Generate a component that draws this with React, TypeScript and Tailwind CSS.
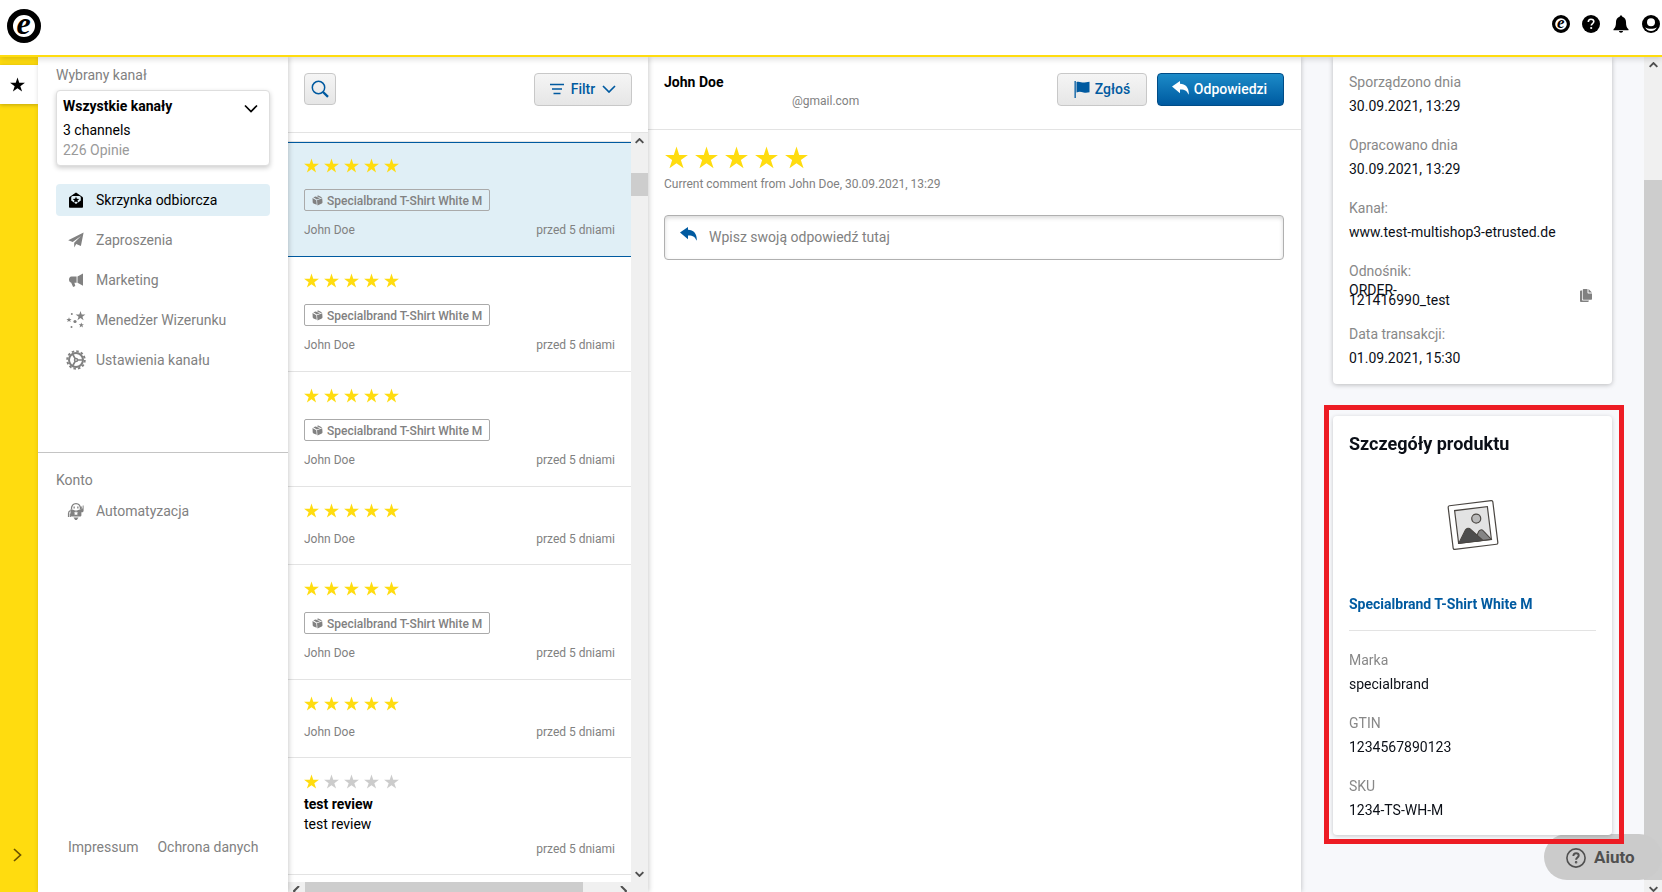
import { useState } from "react";
import type { ReactNode } from "react";
import clsx from "clsx";

interface Review {
  id: number;
  rating: number;
  product?: string;
  author?: string;
  title?: string;
  text?: string;
  date: string;
}

const PRODUCT = "Specialbrand T-Shirt White M";

const reviews: Review[] = [
  { id: 1, rating: 5, product: PRODUCT, author: "John Doe", date: "przed 5 dniami" },
  { id: 2, rating: 5, product: PRODUCT, author: "John Doe", date: "przed 5 dniami" },
  { id: 3, rating: 5, product: PRODUCT, author: "John Doe", date: "przed 5 dniami" },
  { id: 4, rating: 5, author: "John Doe", date: "przed 5 dniami" },
  { id: 5, rating: 5, product: PRODUCT, author: "John Doe", date: "przed 5 dniami" },
  { id: 6, rating: 5, author: "John Doe", date: "przed 5 dniami" },
  { id: 7, rating: 1, title: "test review", text: "test review", date: "przed 5 dniami" },
];

const STAR = "M12 1l2.69 8.29h8.72l-7.05 5.13 2.69 8.29L12 17.58l-7.05 5.13 2.69-8.29L.59 9.29h8.72z";

function Star({ className }: { className?: string }) {
  return (
    <svg viewBox="0.5 0.4 23 23" className={className} fill="currentColor" aria-hidden="true">
      <path d={STAR} />
    </svg>
  );
}

function Stars({ rating, large }: { rating: number; large?: boolean }) {
  return (
    <div className={clsx("flex", large ? "gap-[7px]" : "gap-[5px]")} role="img" aria-label={`${rating}/5`}>
      {[1, 2, 3, 4, 5].map((n) => (
        <Star
          key={n}
          className={clsx(large ? "size-[23px]" : "size-[15px]", n <= rating ? "text-[#ffdc0f]" : "text-[#ccc]")}
        />
      ))}
    </div>
  );
}

function BrandMark({ className }: { className?: string }) {
  return (
    <svg viewBox="0 0 34 34" className={className} aria-hidden="true">
      <circle cx="17" cy="17" r="14" fill="#fff" stroke="#000" strokeWidth="6" />
      <text
        x="16.5"
        y="24.5"
        textAnchor="middle"
        fontFamily="Liberation Serif, serif"
        fontStyle="italic"
        fontWeight="700"
        fontSize="32"
      >
        e
      </text>
    </svg>
  );
}

function InboxIcon() {
  return (
    <svg viewBox="0 0 16 16" className="size-4" aria-hidden="true">
      <path fill="currentColor" fillRule="evenodd" d="M8 .5l6.2 4.3c.5.3.8.8.8 1.4V15a.8.8 0 0 1-.8.8H1.800A.8.8 0 0 1 1 15V6.200c0-.6.3-1.100.8-1.400zM3.200 5.500v3L8 12l4.800-3.500v-3A1.500 1.500 0 0 0 11.300 4H4.700a1.500 1.500 0 0 0-1.500 1.500z" />
      <path fill="currentColor" d="M8 4.600l.9 2.200 2.400.2-1.800 1.500.6 2.300L8 9.600l-2.100 1.200.6-2.300L4.700 7l2.400-.2z" />
    </svg>
  );
}

function PlaneIcon() {
  return (
    <svg viewBox="0 0 16 16" className="size-4" fill="currentColor" aria-hidden="true">
      <path d="M15.600.5L.2 8.300l4.500 1.800L13 4 6.200 10.800V15.500l2-3.400 4.700 1.800z" />
    </svg>
  );
}

function MegaphoneIcon() {
  return (
    <svg viewBox="0 0 16 16" className="size-4" fill="currentColor" aria-hidden="true">
      <path d="M15 1.500v12.300l-5.500-3V4.500z" />
      <path d="M8.600 4.400v6.300H6.400l.9 3.300-2.200 1-2-4.400C1.600 10.200 1 9 1 7.500s.8-3.100 2.500-3.100z" />
    </svg>
  );
}

function SparkleIcon() {
  return (
    <svg viewBox="0 0 20 20" className="size-5" fill="currentColor" aria-hidden="true">
      <path d="M14.500 1l1.200 3.500h3.700l-3 2.200 1.200 3.600-3.100-2.200-3.100 2.200 1.200-3.600-3-2.200h3.700z" />
      <path d="M3 7.200l.7 1.800h1.900L4.100 10.200l.6 1.900L3 11l-1.700 1.100.6-1.900L.4 9h1.900z" />
      <path d="M15.300 12.500l.7 1.800h1.900l-1.500 1.200.6 1.900-1.700-1.100-1.700 1.100.6-1.900-1.500-1.200h1.900z" />
      <circle cx="9" cy="11.500" r="1.600" />
      <circle cx="5.800" cy="4" r="1" />
      <circle cx="5.500" cy="17" r="1" />
    </svg>
  );
}

function GearIcon() {
  return (
    <svg viewBox="0 0 20 20" className="size-5" fill="none" stroke="currentColor" aria-hidden="true">
      <circle cx="10" cy="10" r="7" strokeWidth="2" />
      <circle cx="10" cy="10" r="8.800" strokeWidth="1.900" strokeDasharray="2.500 2.110" />
      <circle cx="10" cy="10" r="1.500" strokeWidth="1.500" />
      <path strokeWidth="1.700" d="M11.500 10H17M9.200 8.700L6.500 4M9.200 11.300L6.500 16" />
    </svg>
  );
}

function RobotIcon() {
  return (
    <svg viewBox="0 0 18 18" className="size-[18px]" aria-hidden="true">
      <path fill="none" stroke="currentColor" strokeWidth="1.300" d="M4.500 7.500C4.200 3.500 6.200 1.600 9 1.600s4.800 1.900 4.500 5.900" />
      <path fill="currentColor" d="M6.500 4.500h1.300v2H6.500zM10.200 4.500h1.300v2h-1.300z" />
      <path fill="currentColor" fillRule="evenodd" d="M3.500 7.300l2.700.5c1 1 4.600 1 5.600 0l1.200-.4 1.200-.2V4.500h.9v2h.6V3.500h.9v5.200c0 .9-.6 1.500-1.500 1.500h-.7v3c0 .8-.7 1.400-1.500 1.400H5c-.8 0-1.500-.6-1.500-1.400zM9 9l-.7 1.500-1.600.1 1.200 1.100-.4 1.600L9 12.400l1.500.9-.4-1.600 1.200-1.100-1.600-.1z" />
      <path fill="none" stroke="currentColor" strokeWidth="1.200" d="M3.500 8.500c-1.400.5-2 1.500-2 3V15M3.300 11.500V15" />
      <path fill="currentColor" d="M6.500 15.500h5L9.800 18H8.200z" />
    </svg>
  );
}

function ReplyIcon({ className }: { className?: string }) {
  return (
    <svg viewBox="0 0 17 14" className={className} fill="currentColor" aria-hidden="true">
      <path d="M0 5.500L8 0v2.800c5.500.2 8.600 3.600 8.800 9.400l-.4 1.600c-1-3.800-3.400-5.400-8.400-5.300v3.800z" />
    </svg>
  );
}

function BoxIcon() {
  return (
    <svg viewBox="0 0 11 11" className="size-[11px] shrink-0" fill="currentColor" aria-hidden="true">
      <path d="M.5 3L4.300 5.200 4.700 9.700 1.600 8.400C1 8.100.8 7.800.7 7.200z" />
      <path d="M5 5.300L10.200 3.200l.3 4c0 .6-.2.900-.7 1.200L5.500 10.500z" />
      <path d="M1.300 2.300L3.600 1.500 8 3.300 4.900 4.600zM4.600 1l1.700-.5 3.900 1.900-1.500.5z" />
    </svg>
  );
}

function Chevron({ className, d = "M1 1l6 6 6-6", viewBox = "0 0 14 8" }: { className?: string; d?: string; viewBox?: string }) {
  return (
    <svg viewBox={viewBox} className={className} fill="none" stroke="currentColor" strokeWidth="1.700" aria-hidden="true">
      <path d={d} />
    </svg>
  );
}

function PicturePlaceholder() {
  return (
    <svg viewBox="0 0 52 52" className="size-[52px]" stroke="#4a4642" aria-hidden="true">
      <g transform="rotate(-7 26 26)">
        <rect x="3.500" y="4" width="45" height="44" rx="1.500" fill="#fff" strokeWidth="1.200" />
        <rect x="9.500" y="9.500" width="33" height="33" fill="#e3e3e3" strokeWidth="1.200" />
        <circle cx="30" cy="20" r="4.500" fill="#b9b9b9" strokeWidth="1.200" />
        <path d="M25 42.500l6-9.500c1-1.600 3.300-1.600 4.500 0l7 9.500z" fill="#858585" strokeWidth="1" />
        <path d="M9.500 42.500l8.300-12.500c1.300-2 4-2 5.400 0l10.800 12.500z" fill="#4d4d4d" strokeWidth="1" />
      </g>
    </svg>
  );
}

function NavItem({ icon, label, active }: { icon: ReactNode; label: string; active?: boolean }) {
  return (
    <a
      href="#"
      className={clsx(
        "flex h-8 items-center gap-[10px] rounded px-[10px] text-sm",
        active ? "bg-[#e0eff6] text-black" : "text-[#818181]"
      )}
    >
      <span className="flex w-5 justify-center">{icon}</span>
      {label}
    </a>
  );
}

function ReviewRow({ review, selected, onSelect }: { review: Review; selected: boolean; onSelect: () => void }) {
  return (
    <button
      onClick={onSelect}
      className={clsx(
        "block w-full shrink-0 border-y px-4 pt-[15px] text-left",
        review.product ? "pb-[18px]" : "pb-[17px]",
        selected ? "border-[#005aa0] bg-[#e0eff6]" : "border-t-transparent border-b-[#e3e3e3]"
      )}
    >
      <Stars rating={review.rating} />
      {review.product && (
        <span className="mt-4 flex h-[22px] w-fit items-center gap-1 rounded-xs border border-[#aaa] px-[7px] pt-px text-xs font-medium text-[#818181]">
          <BoxIcon />
          {review.product}
        </span>
      )}
      {review.title && <strong className="mt-[5px] block text-sm">{review.title}</strong>}
      {review.text && <span className="block text-sm">{review.text}</span>}
      <span
        className={clsx(
          "flex justify-between text-xs text-[#818181]",
          review.product ? "mt-[11px]" : review.text ? "mt-[7px]" : "mt-[13px]"
        )}
      >
        <span>{review.author}</span>
        <span>{review.date}</span>
      </span>
    </button>
  );
}

function Field({ label, children }: { label: string; children: ReactNode }) {
  return (
    <div className="text-sm leading-6">
      <dt className="text-[#888]">{label}</dt>
      <dd className="text-[#0b0f17]">{children}</dd>
    </div>
  );
}

export default function App() {
  const [selected, setSelected] = useState(1);

  return (
    <div className="flex h-screen flex-col overflow-hidden bg-white font-[Roboto,sans-serif] text-black">
      <header className="relative z-30 flex h-[57px] shrink-0 items-start justify-between border-b-2 border-[#ffdc0f] bg-white pt-[9px] pr-[2px] pl-[7px] shadow-[0_2px_6px_rgba(0,0,0,0.15)]">
        <a href="#" aria-label="eTrusted">
          <BrandMark className="size-[34px]" />
        </a>
        <div className="flex items-center gap-3 pt-[6px]">
          <button aria-label="Profil">
            <BrandMark className="block size-[18px]" />
          </button>
          <button aria-label="Pomoc">
            <svg viewBox="0 0 18 18" className="block size-[18px]">
              <circle cx="9" cy="9" r="9" />
              <path d="M6.300 7c0-1.800 1.100-2.800 2.700-2.800s2.800.9 2.800 2.400c0 2-2.500 2.100-2.500 4" fill="none" stroke="#fff" strokeWidth="1.600" />
              <circle cx="9.200" cy="13" r="1.100" fill="#fff" />
            </svg>
          </button>
          <button aria-label="Powiadomienia">
            <svg viewBox="0 0 18 18" className="block size-[18px]">
              <path d="M9 .5c.8 0 1.300.4 1.300 1.300C12.800 2.600 14 4.600 14 7c0 4 .7 5.800 2.500 7.300v.9h-15v-.9C3.300 12.800 4 11 4 7c0-2.400 1.200-4.400 3.700-5.200C7.700.9 8.200.5 9 .5zM7 16h4c0 1-.9 1.700-2 1.700S7 17 7 16z" />
            </svg>
          </button>
          <button aria-label="Konto">
            <svg viewBox="0 0 18 18" className="block size-[18px]">
              <circle cx="9" cy="9" r="9" />
              <circle cx="9" cy="7.200" r="4" fill="#fff" />
              <path d="M3.200 12.200c1.500 1 3.500 1.500 5.800 1.500s4.300-.5 5.800-1.500c-.8 2.400-3 3.800-5.800 3.800s-5-1.400-5.800-3.800z" fill="#fff" />
            </svg>
          </button>
        </div>
      </header>

      <div className="flex min-h-0 flex-1">
        <div className="flex w-[38px] shrink-0 flex-col justify-between bg-[#ffdc0f] pt-2 pb-[30px]">
          <a href="#" aria-label="Opinie" className="flex h-[39px] items-center bg-white pl-[10px] shadow-[0_1px_4px_rgba(0,0,0,0.25)]">
            <Star className="size-[15px]" />
          </a>
          <button aria-label="Rozwiń" className="pl-[13px] text-[#6b5300]">
            <Chevron className="h-[14px] w-[9px]" viewBox="0 0 9 14" d="M1 1l6.500 6L1 13" />
          </button>
        </div>

        <nav className="relative z-20 flex w-[250px] shrink-0 flex-col bg-white shadow-[1px_0_5px_rgba(0,0,0,0.2)]">
          <div className="flex h-[396px] shrink-0 flex-col border-b border-[#c4c4c4] px-[18px] pt-2">
            <p className="text-sm text-[#818181]">Wybrany kanał</p>
            <button className="mt-[5px] flex h-[76px] items-start justify-between rounded border border-[#dedede] bg-white pt-[5px] pr-[11px] pl-[6px] text-left text-sm shadow-[0_2px_5px_rgba(0,0,0,0.2)]">
              <span>
                <strong className="block">Wszystkie kanały</strong>
                <span className="mt-1 block">3 channels</span>
                <span className="block text-[#9a9a9a]">226 Opinie</span>
              </span>
              <Chevron className="mt-2 h-[9px] w-[14px]" />
            </button>
            <div className="mt-[18px] flex flex-col gap-2">
              <NavItem icon={<InboxIcon />} label="Skrzynka odbiorcza" active />
              <NavItem icon={<PlaneIcon />} label="Zaproszenia" />
              <NavItem icon={<MegaphoneIcon />} label="Marketing" />
              <NavItem icon={<SparkleIcon />} label="Menedżer Wizerunku" />
              <NavItem icon={<GearIcon />} label="Ustawienia kanału" />
            </div>
          </div>
          <div className="px-[18px] pt-[17px]">
            <p className="mb-[5px] text-sm text-[#818181]">Konto</p>
            <NavItem icon={<RobotIcon />} label="Automatyzacja" />
          </div>
          <div className="mt-auto flex gap-[19px] pb-[35px] pl-[30px] text-sm text-[#818181]">
            <a href="#">Impressum</a>
            <a href="#">Ochrona danych</a>
          </div>
        </nav>

        <section className="relative z-10 flex w-[360px] shrink-0 flex-col bg-white shadow-[1px_0_5px_rgba(0,0,0,0.2)]">
          <div className="flex h-[76px] shrink-0 items-start justify-between border-b border-[#e3e3e3] px-4 pt-4">
            <button
              aria-label="Szukaj"
              className="flex size-8 items-center justify-center rounded border border-[#c8c8c8] bg-linear-to-b from-[#f5f5f5] to-[#e6e6e6] text-[#005aa0]"
            >
              <svg viewBox="0 0 18 18" className="size-[18px]" fill="none" stroke="currentColor" aria-hidden="true">
                <circle cx="7.500" cy="7.500" r="6.200" strokeWidth="1.500" />
                <path d="M12 12l5 4.800" strokeWidth="2.400" />
              </svg>
            </button>
            <button className="flex h-[33px] w-[98px] items-center justify-center gap-[7px] rounded border border-[#c8c8c8] bg-linear-to-b from-[#f5f5f5] to-[#e6e6e6] pb-px text-sm font-medium text-[#005aa0]">
              <svg viewBox="0 0 14 12" className="h-3 w-[14px]" stroke="currentColor" strokeWidth="1.500" aria-hidden="true">
                <path d="M0 1.500h14M2 6h10M3.500 10.500h7" />
              </svg>
              Filtr
              <Chevron className="h-2 w-[14px]" />
            </button>
          </div>
          <div className="flex min-h-0 flex-1">
            <div className="flex min-w-0 flex-1 flex-col overflow-hidden">
              <div className="h-[9px] shrink-0 border-b border-[#e3e3e3]" />
              {reviews.map((review) => (
                <ReviewRow
                  key={review.id}
                  review={review}
                  selected={review.id === selected}
                  onSelect={() => setSelected(review.id)}
                />
              ))}
            </div>
            <div className="flex w-[17px] flex-col items-center justify-between bg-[#f0f0f0] pt-[5px] pb-[5px] text-[#505050]">
              <Chevron className="h-[6px] w-[9px] stroke-[3px]" d="M1 7l6-6 6 6" />
              <div className="mb-auto mt-[29px] h-[23px] w-full bg-[#cdcdcd]" />
              <Chevron className="h-[6px] w-[9px] stroke-[3px]" />
            </div>
          </div>
          <div className="flex h-[10px] shrink-0 items-end gap-[5px] bg-[#f0f0f0] pl-[5px] text-[#505050]">
            <Chevron className="h-[6px] w-[7px] stroke-2" viewBox="0 0 7 6" d="M6 0L1 5l1 1" />
            <div className="h-full w-[278px] bg-[#cdcdcd]" />
            <Chevron className="mr-[21px] ml-auto h-[6px] w-[7px] stroke-2" viewBox="0 0 7 6" d="M1 0l5 5-1 1" />
          </div>
        </section>

        <main className="relative min-w-0 flex-1 bg-white shadow-[0_0_5px_rgba(0,0,0,0.25)]">
          <div className="flex h-[73px] items-start justify-between border-b border-[#e3e3e3] px-4 pt-4 pr-[17px]">
            <div>
              <h1 className="text-sm leading-[18px] font-bold">John Doe</h1>
              <p className="mt-[2px] pl-32 text-xs text-[#818181]">@gmail.com</p>
            </div>
            <div className="flex gap-[10px]">
              <button className="flex h-[33px] w-[90px] items-center justify-center gap-[5px] rounded border border-[#c8c8c8] bg-linear-to-b from-[#f5f5f5] to-[#e6e6e6] pb-px text-sm font-medium text-[#005aa0]">
                <svg viewBox="0 0 16 17" className="h-[17px] w-4" fill="currentColor" aria-hidden="true">
                  <path d="M.5 0h1.300v17H.5zM2.500 1c3-1 5 .8 8 .5L15.500.8v10.400c-2 .5-4 .7-6 .2-2.500-.6-4.500-.9-7 0z" />
                </svg>
                Zgłoś
              </button>
              <button className="flex h-[33px] w-[127px] items-center justify-center gap-[5px] rounded border border-[#004c87] bg-linear-to-b from-[#1c8bc8] to-[#005aa0] pr-[2px] pb-px text-sm font-medium text-white">
                <ReplyIcon className="mb-[2px] h-[14px] w-[17px]" />
                Odpowiedzi
              </button>
            </div>
          </div>
          <div className="pt-4 pr-[17px] pl-4">
            <div className="pl-[1px]">
              <Stars rating={5} large />
            </div>
            <p className="mt-[7px] text-xs text-[#818181]">Current comment from John Doe, 30.09.2021, 13:29</p>
            <label className="mt-[23px] flex h-[45px] items-center gap-3 rounded border border-[#b0b0b0] px-[15px] pb-[2px] shadow-[inset_0_2px_4px_rgba(0,0,0,0.15)]">
              <ReplyIcon className="mb-[5px] h-[14px] w-[17px] shrink-0 text-[#005aa0]" />
              <input
                type="text"
                aria-label="Odpowiedź"
                placeholder="Wpisz swoją odpowiedź tutaj"
                className="min-w-0 flex-1 bg-transparent text-sm outline-none placeholder:text-[#818181]"
              />
            </label>
          </div>
        </main>

        <aside className="w-[343px] shrink-0 bg-[#f7f8fb]">
          <dl className="mr-8 ml-8 flex h-[327px] flex-col gap-[15px] rounded-b bg-white px-4 pt-[13px] shadow-[0_1px_5px_rgba(0,0,0,0.25)]">
            <Field label="Sporządzono dnia">30.09.2021, 13:29</Field>
            <Field label="Opracowano dnia">30.09.2021, 13:29</Field>
            <Field label="Kanał:">www.test-multishop3-etrusted.de</Field>
            <Field label="Odnośnik:">
              <span className="flex items-center justify-between pt-[2px] pr-1 pb-[2px] leading-[10px]">
                <span>
                  ORDER-
                  <br />
                  121416990_test
                </span>
                <button aria-label="Kopiuj" className="text-[#818181]">
                  <svg viewBox="0 0 12 13" className="block h-[13px] w-3" fill="currentColor" aria-hidden="true">
                    <path d="M3.500 0h4v3.500c0 .6.400 1 1 1H12V10c0 .4-.3.700-.7.700H3.500a.7.700 0 0 1-.7-.7V.7c0-.4.300-.7.700-.7zM8.500 0L12 3.500H8.500zM0 2.500c0-.5.400-.9.900-.9h1.200V11c0 .2.200.400.4.400h6.300v.7c0 .5-.4.900-.9.900H.9a.9.900 0 0 1-.9-.9z" />
                  </svg>
                </button>
              </span>
            </Field>
            <Field label="Data transakcji:">01.09.2021, 15:30</Field>
          </dl>

          <div className="relative z-30 mt-[21px] mr-5 ml-[23px] border-[5px] border-[#ed1c24] px-1 pt-[6px] pb-1">
            <section className="mr-[3px] rounded bg-white px-4 pt-4 pb-[13px] shadow-[0_1px_4px_rgba(0,0,0,0.2)]">
              <h2 className="text-lg leading-6 font-bold text-[#0b0f17]">Szczegóły produktu</h2>
              <div className="flex h-[138px] items-center justify-center">
                <PicturePlaceholder />
              </div>
              <a href="#" className="block text-sm font-bold text-[#005aa0]">
                {PRODUCT}
              </a>
              <hr className="mt-4 mb-[17px] border-[#e3e3e3]" />
              <dl className="flex flex-col gap-[15px]">
                <Field label="Marka">specialbrand</Field>
                <Field label="GTIN">1234567890123</Field>
                <Field label="SKU">1234-TS-WH-M</Field>
              </dl>
            </section>
          </div>
        </aside>

        <div className="flex w-[18px] shrink-0 flex-col items-center bg-[#f0f0f0] pt-[5px] text-[#505050]">
          <Chevron className="h-[6px] w-[9px] shrink-0 stroke-[3px]" d="M1 7l6-6 6 6" />
          <div className="mt-28 w-full flex-1 bg-[#cdcdcd]" />
          <Chevron className="mt-[6px] h-[6px] w-[9px] shrink-0 stroke-[3px]" />
        </div>
      </div>

      <button className="fixed right-0 bottom-3 z-20 flex h-[46px] w-[118px] items-center gap-2 rounded-full bg-[#cbcbcb] pt-px pl-[22px] text-[17px] font-bold text-[#505050]">
        <svg viewBox="0 0 20 20" className="size-5" fill="none" stroke="currentColor" strokeWidth="1.600" aria-hidden="true">
          <circle cx="10" cy="10" r="9.100" />
          <path d="M7.400 8c0-1.600 1-2.700 2.700-2.700s2.600.9 2.600 2.300c0 1.900-2.600 2.100-2.600 4.200" strokeWidth="2" />
          <circle cx="10.100" cy="14.300" r=".5" />
        </svg>
        Aiuto
      </button>
    </div>
  );
}
